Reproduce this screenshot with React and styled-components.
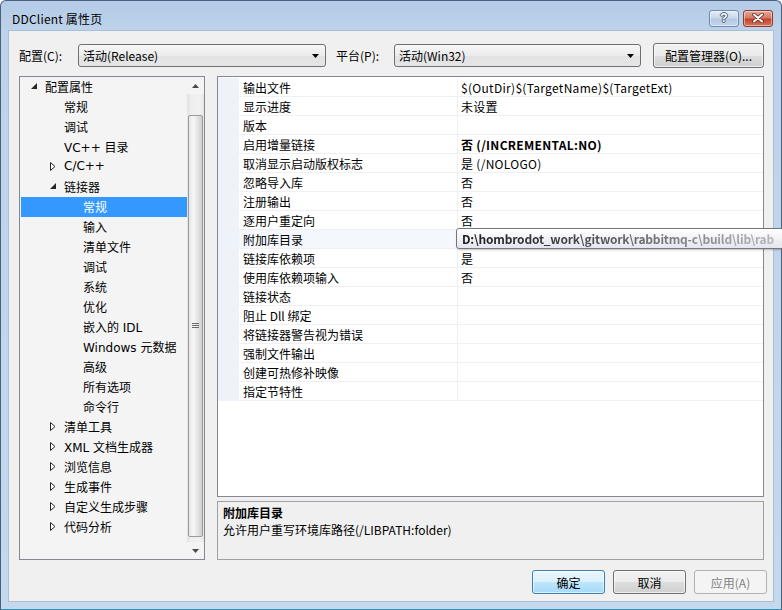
import styled, { createGlobalStyle } from "styled-components";

const uiFont = `"Noto Sans CJK SC", "Noto Sans", sans-serif`;
const treeFont = `"DejaVu Sans", "Noto Sans CJK SC", sans-serif`;

const GlobalStyle = createGlobalStyle`
  html, body {
    margin: 0;
    padding: 0;
    background: #ffffff;
    overflow: hidden;
  }
  body {
    font-family: ${uiFont};
    font-size: 12px;
    color: #000;
  }
`;

const treeItems = [
  { label: "配置属性", level: 0, state: "open" },
  { label: "常规", level: 1 },
  { label: "调试", level: 1 },
  { label: "VC++ 目录", level: 1 },
  { label: "C/C++", level: 1, state: "closed" },
  { label: "链接器", level: 1, state: "open" },
  { label: "常规", level: 2, selected: true },
  { label: "输入", level: 2 },
  { label: "清单文件", level: 2 },
  { label: "调试", level: 2 },
  { label: "系统", level: 2 },
  { label: "优化", level: 2 },
  { label: "嵌入的 IDL", level: 2 },
  { label: "Windows 元数据", level: 2 },
  { label: "高级", level: 2 },
  { label: "所有选项", level: 2 },
  { label: "命令行", level: 2 },
  { label: "清单工具", level: 1, state: "closed" },
  { label: "XML 文档生成器", level: 1, state: "closed" },
  { label: "浏览信息", level: 1, state: "closed" },
  { label: "生成事件", level: 1, state: "closed" },
  { label: "自定义生成步骤", level: 1, state: "closed" },
  { label: "代码分析", level: 1, state: "closed" },
];

const props = [
  { name: "输出文件", value: "$(OutDir)$(TargetName)$(TargetExt)" },
  { name: "显示进度", value: "未设置" },
  { name: "版本", value: "" },
  { name: "启用增量链接", value: "否 (/INCREMENTAL:NO)", bold: true },
  { name: "取消显示启动版权标志", value: "是 (/NOLOGO)" },
  { name: "忽略导入库", value: "否" },
  { name: "注册输出", value: "否" },
  { name: "逐用户重定向", value: "否" },
  { name: "附加库目录", value: "", hover: true },
  { name: "链接库依赖项", value: "是" },
  { name: "使用库依赖项输入", value: "否" },
  { name: "链接状态", value: "" },
  { name: "阻止 Dll 绑定", value: "" },
  { name: "将链接器警告视为错误", value: "" },
  { name: "强制文件输出", value: "" },
  { name: "创建可热修补映像", value: "" },
  { name: "指定节特性", value: "" },
];

// ---- window frame ----
const Window = styled.div`
  width: 782px;
  height: 610px;
  box-sizing: border-box;
  border: 1px solid #4b6079;
  border-bottom-color: #2f8fb5;
  border-radius: 6px 6px 0 0;
  background: linear-gradient(to bottom, #b3cbe7 0px, #bed3eb 30px, #c4d8ee 100%);
  display: flex;
  flex-direction: column;
  padding: 0 7px 7px 7px;
`;

const TitleBar = styled.div`
  height: 29px;
  display: flex;
  align-items: center;
  padding: 5px 1px 0 4px;
  box-sizing: border-box;
`;

const Title = styled.div`
  flex: 1;
  font-size: 12px;
  color: #000;
  letter-spacing: 0.2px;
`;

const CaptionButton = styled.div`
  width: ${(p) => p.$w}px;
  height: 17px;
  box-sizing: border-box;
  border: 1px solid ${(p) => (p.$close ? "#8b3a2b" : "#6f8aab")};
  border-radius: 3px;
  margin-left: ${(p) => (p.$close ? 4 : 0)}px;
  background: ${(p) =>
    p.$close
      ? "linear-gradient(to bottom, #e9a99b 0%, #d47a66 45%, #c2432c 55%, #d8755c 100%)"
      : "linear-gradient(to bottom, #e4ecf6 0%, #c9d8ea 45%, #b4c8e1 55%, #c5d6ec 100%)"};
  box-shadow: inset 0 0 0 1px rgba(255, 255, 255, 0.45);
  display: flex;
  align-items: center;
  justify-content: center;
`;

const HelpGlyph = styled.span`
  font-family: "Liberation Sans", sans-serif;
  font-weight: bold;
  font-size: 12px;
  color: #ffffff;
  text-shadow: 0 0 1px #3d5068, 1px 0 0 #4d6079, -1px 0 0 #4d6079, 0 1px 0 #4d6079,
    0 -1px 0 #4d6079;
  line-height: 1;
`;

const Client = styled.div`
  flex: 1;
  background: #f0f0f0;
  border: 1px solid #a9bfd8;
  padding: 12px 9px 0 10px;
  display: flex;
  flex-direction: column;
`;

// ---- top config row ----
const ConfigRow = styled.div`
  display: flex;
  align-items: center;
  height: 25px;
`;

const FieldLabel = styled.div`
  width: ${(p) => p.$w}px;
  font-size: 12px;
`;

const Combo = styled.div`
  width: ${(p) => p.$w}px;
  height: 23px;
  box-sizing: border-box;
  border: 1px solid #707070;
  border-radius: 3px;
  background: linear-gradient(to bottom, #f6f6f6 0%, #ececec 50%, #e2e2e2 51%, #e6e6e6 100%);
  display: flex;
  align-items: center;
  padding: 0 6px 0 4px;
  font-size: 12px;
  margin-right: ${(p) => p.$mr || 0}px;
`;

const ComboText = styled.span`
  flex: 1;
`;

const Button = styled.div`
  width: ${(p) => p.$w}px;
  height: ${(p) => p.$h || 24}px;
  box-sizing: border-box;
  border: 1px solid ${(p) => (p.$default ? "#3c7fb1" : p.$disabled ? "#adb2b5" : "#707070")};
  border-radius: 3px;
  background: ${(p) =>
    p.$default
      ? "linear-gradient(to bottom, #eaf6fd 0%, #d9f0fc 50%, #bee6fd 51%, #a7d9f5 100%)"
      : p.$disabled
      ? "#f4f4f4"
      : "linear-gradient(to bottom, #f2f2f2 0%, #ebebeb 50%, #dddddd 51%, #cfcfcf 100%)"};
  box-shadow: ${(p) => (p.$disabled ? "none" : "inset 0 0 0 1px rgba(255,255,255,0.6)")};
  color: ${(p) => (p.$disabled ? "#838383" : "#000")};
  display: flex;
  align-items: center;
  justify-content: center;
  font-size: 12px;
`;

// ---- main area ----
const Main = styled.div`
  display: flex;
  gap: 12px;
  margin-top: 8px;
  height: 484px;
`;

const Tree = styled.div`
  width: 186px;
  box-sizing: border-box;
  border: 1px solid #828790;
  background: #f4f4f4;
  display: flex;
`;

const TreeList = styled.div`
  flex: 1;
  font-family: ${treeFont};
  font-size: 12px;
`;

const TreeRow = styled.div`
  height: 20px;
  box-sizing: border-box;
  padding-bottom: 2px;
  display: flex;
  align-items: center;
  padding-left: ${(p) => 9 + p.$level * 19}px;
  margin-left: 1px;
  background: ${(p) => (p.$selected ? "#3399ff" : "transparent")};
  color: ${(p) => (p.$selected ? "#ffffff" : "#000000")};
  white-space: nowrap;
`;

const Expander = styled.span`
  width: 15px;
  height: 18px;
  display: flex;
  align-items: center;
  flex-shrink: 0;
`;

const ScrollBar = styled.div`
  width: 17px;
  display: flex;
  flex-direction: column;
  background: linear-gradient(to right, #e2e2e2 0%, #efefef 25%, #f1f1f1 75%, #e6e6e6 100%);
`;

const ScrollArrow = styled.div`
  height: 17px;
  display: flex;
  align-items: center;
  justify-content: center;
  background: #f4f4f4;
`;

const ScrollGap = styled.div`
  height: ${(p) => p.$h}px;
`;

const Thumb = styled.div`
  flex: 1;
  margin: 0 1px;
  border: 1px solid #9b9b9b;
  border-radius: 2px;
  background: linear-gradient(to right, #e6e6e6 0%, #f6f6f6 35%, #e8e8e8 60%, #cfcfcf 100%);
  display: flex;
  align-items: center;
  justify-content: center;
`;

const RightColumn = styled.div`
  flex: 1;
  display: flex;
  flex-direction: column;
  gap: 4px;
`;

const Grid = styled.div`
  height: 421px;
  box-sizing: border-box;
  border: 1px solid #828790;
  background: #ffffff;
  position: relative;
  padding-top: 1px;
`;

const PropRow = styled.div`
  display: grid;
  grid-template-columns: 21px 219px 1fr;
  height: 19px;
`;

const Gutter = styled.div`
  background: #eef3fa;
`;

const NameCell = styled.div`
  border-bottom: 1px solid #eef0f2;
  border-right: 1px solid #eef0f2;
  padding-left: 4px;
  display: flex;
  align-items: center;
  background: ${(p) => (p.$hover ? "#f4f7fc" : "transparent")};
  white-space: nowrap;
`;

const ValueCell = styled.div`
  border-bottom: 1px solid #eef0f2;
  padding-left: 3px;
  display: flex;
  align-items: center;
  font-weight: ${(p) => (p.$bold ? "bold" : "normal")};
  letter-spacing: 0.3px;
  white-space: nowrap;
`;

const Tooltip = styled.div`
  position: absolute;
  left: 238px;
  top: 151px;
  width: 328px;
  height: 21px;
  box-sizing: border-box;
  border: 1px solid #767676;
  border-radius: 3px;
  background: linear-gradient(to bottom, #ffffff 0%, #e4e5f0 100%);
  box-shadow: 1px 1px 2px rgba(0, 0, 0, 0.25);
  padding-left: 5px;
  display: flex;
  align-items: center;
  overflow: hidden;
  white-space: nowrap;
`;

const TooltipText = styled.span`
  font-weight: bold;
  font-size: 12px;
  background: linear-gradient(to right, #1a1a1a 0%, #444 35%, #8a8a8a 75%, #b8b8b8 100%);
  -webkit-background-clip: text;
  background-clip: text;
  color: transparent;
  letter-spacing: -0.2px;
`;

const Description = styled.div`
  flex: 1;
  box-sizing: border-box;
  border: 1px solid #a0a0a0;
  padding: 2px 5px;
  line-height: 17px;
`;

const DescTitle = styled.div`
  font-weight: bold;
`;

const ButtonRow = styled.div`
  display: flex;
  justify-content: flex-end;
  gap: 8px;
  margin-top: 10px;
  margin-right: -3px;
`;

const DropArrow = () => (
  <svg width="7" height="4" viewBox="0 0 7 4">
    <polygon points="0,0 7,0 3.5,4" fill="#000" />
  </svg>
);

const ExpandIcon = ({ state }) => {
  if (state === "open") {
    return (
      <svg width="6" height="6" viewBox="0 0 6 6" style={{ marginLeft: 1 }}>
        <polygon points="6,0 6,6 0,6" fill="#262626" />
      </svg>
    );
  }
  if (state === "closed") {
    return (
      <svg width="6" height="9" viewBox="0 0 6 9" style={{ marginLeft: 1 }}>
        <polygon points="0.5,0.5 5,4.5 0.5,8.5" fill="#ffffff" stroke="#262626" strokeWidth="1" />
      </svg>
    );
  }
  return null;
};

const App = () => {
  return (
    <>
      <GlobalStyle />
      <Window>
        <TitleBar>
          <Title>DDClient 属性页</Title>
          <CaptionButton $w={30}>
            <HelpGlyph>?</HelpGlyph>
          </CaptionButton>
          <CaptionButton $w={30} $close>
            <svg width="12" height="10" viewBox="0 0 12 10">
              <path d="M2 1.5 L10 8.5 M10 1.5 L2 8.5" stroke="#5a2a22" strokeWidth="3.6" strokeLinecap="round" />
              <path d="M2 1.5 L10 8.5 M10 1.5 L2 8.5" stroke="#ffffff" strokeWidth="2" strokeLinecap="round" />
            </svg>
          </CaptionButton>
        </TitleBar>
        <Client>
          <ConfigRow>
            <FieldLabel $w={59}>配置(C):</FieldLabel>
            <Combo $w={248} $mr={10}>
              <ComboText>活动(Release)</ComboText>
              <DropArrow />
            </Combo>
            <FieldLabel $w={58}>平台(P):</FieldLabel>
            <Combo $w={247} $mr={12}>
              <ComboText>活动(Win32)</ComboText>
              <DropArrow />
            </Combo>
            <Button $w={111} $h={25}>配置管理器(O)...</Button>
          </ConfigRow>

          <Main>
            <Tree>
              <TreeList>
                {treeItems.map((item, i) => (
                  <TreeRow key={i} $level={item.level} $selected={item.selected}>
                    <Expander>
                      <ExpandIcon state={item.state} />
                    </Expander>
                    {item.label}
                  </TreeRow>
                ))}
              </TreeList>
              <ScrollBar>
                <ScrollArrow>
                  <svg width="7" height="4" viewBox="0 0 7 4">
                    <polygon points="0,4 7,4 3.5,0" fill="#4a4a4a" />
                  </svg>
                </ScrollArrow>
                <ScrollGap $h={21} />
                <Thumb>
                  <svg width="7" height="6" viewBox="0 0 7 6">
                    <path d="M0 0.5 H7 M0 2.5 H7 M0 4.5 H7" stroke="#6b6b6b" strokeWidth="1" />
                  </svg>
                </Thumb>
                <ScrollGap $h={5} />
                <ScrollArrow>
                  <svg width="7" height="4" viewBox="0 0 7 4">
                    <polygon points="0,0 7,0 3.5,4" fill="#4a4a4a" />
                  </svg>
                </ScrollArrow>
              </ScrollBar>
            </Tree>

            <RightColumn>
              <Grid>
                {props.map((p, i) => (
                  <PropRow key={i}>
                    <Gutter />
                    <NameCell $hover={p.hover}>{p.name}</NameCell>
                    <ValueCell $bold={p.bold}>{p.value}</ValueCell>
                  </PropRow>
                ))}
                <Tooltip>
                  <TooltipText>D:\hombrodot_work\gitwork\rabbitmq-c\build\lib\rab</TooltipText>
                </Tooltip>
              </Grid>
              <Description>
                <DescTitle>附加库目录</DescTitle>
                <div>允许用户重写环境库路径(/LIBPATH:folder)</div>
              </Description>
            </RightColumn>
          </Main>

          <ButtonRow>
            <Button $w={73} $default>确定</Button>
            <Button $w={73}>取消</Button>
            <Button $w={73} $disabled>应用(A)</Button>
          </ButtonRow>
        </Client>
      </Window>
    </>
  );
};

export default App;
